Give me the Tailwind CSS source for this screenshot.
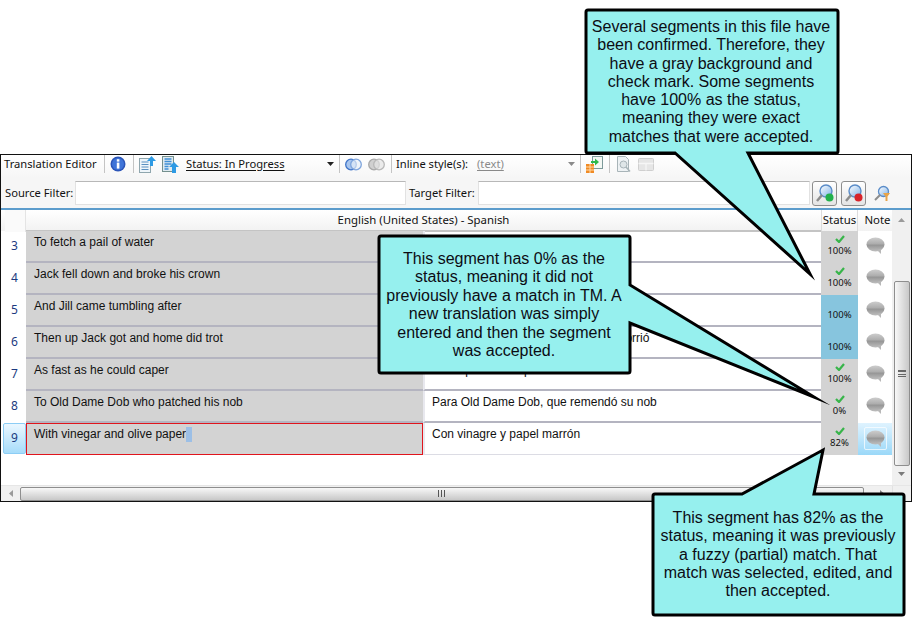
<!DOCTYPE html>
<html lang="en">
<head>
<meta charset="UTF-8">
<title>Translation Editor</title>
<script src="https://cdn.jsdelivr.net/npm/@tailwindcss/browser@4"></script>
</head>
<body class="bg-white">
<svg width="0" height="0" class="absolute">
  <defs>
    <linearGradient id="bubbleFill" x1="0" y1="0" x2="0" y2="1">
      <stop offset="0" stop-color="#cdcdcd"/><stop offset="0.45" stop-color="#adadad"/><stop offset="0.55" stop-color="#969696"/><stop offset="1" stop-color="#bebebe"/>
    </linearGradient>
    <symbol id="bubble" viewBox="0 0 19 18">
      <ellipse cx="9.5" cy="7.5" rx="9" ry="7" fill="url(#bubbleFill)"/>
      <path d="M11 13l4 4 0-5z" fill="#b8b8b8"/>
    </symbol>
    <symbol id="check" viewBox="0 0 10 8">
      <path d="M1 4l3 3 5-6" fill="none" stroke="#38b54a" stroke-width="2.2"/>
    </symbol>
    <linearGradient id="lensFill" x1="0" y1="0" x2="1" y2="1">
      <stop offset="0" stop-color="#ffffff"/><stop offset="1" stop-color="#7fb2e8"/>
    </linearGradient>
  </defs>
</svg>

<div class="relative h-[625px] w-[912px] overflow-hidden pt-[154px] font-['Noto_Sans',sans-serif] text-[#111]">
  <!-- editor window -->
  <div class="flex h-[348px] w-[912px] flex-col border border-[#111] bg-white">
    <!-- toolbar -->
    <div class="flex h-[23px] shrink-0 items-center bg-gradient-to-b from-white to-[#f6f6f6] pb-[5px] pl-[3px] text-[11.200px]">
      <span class="w-[100px] whitespace-nowrap">Translation Editor</span>
      <i class="mr-[5px] h-[18px] w-px bg-[#c4c4c4]"></i>
      <svg width="16" height="16" viewBox="0 0 16 16"><circle cx="8" cy="8" r="7.5" fill="#2b55b8"/><circle cx="8" cy="8" r="6" fill="#3f74d8"/><rect x="6.8" y="6.6" width="2.6" height="6" fill="#fff"/><rect x="6.8" y="3.2" width="2.6" height="2.4" fill="#fff"/></svg>
      <i class="ml-[7px] mr-[5px] h-[18px] w-px bg-[#c4c4c4]"></i>
      <svg width="17" height="17" viewBox="0 0 17 17"><rect x="0.5" y="2.5" width="11" height="14" fill="#eef5fa" stroke="#8fa6ae"/><path d="M2.5 6h7M2.5 8.5h7M2.5 11h7M2.5 13.5h7" stroke="#5a8fc0"/><path d="M12.5 0l4.5 5h-3v5h-3V5H8z" fill="#2e9ae4"/></svg>
      <svg class="ml-[6px]" width="17" height="17" viewBox="0 0 17 17"><rect x="0.5" y="0.5" width="11" height="15" fill="#dfeaf0" stroke="#74908e"/><path d="M2.5 3h7M2.5 5.5h7M2.5 8h7M2.5 10.5h4M2.5 13h4" stroke="#3f8fd6" stroke-width="1.4"/><path d="M12 6l5 5h-3v6h-4v-6H7z" fill="#2e9ae4"/></svg>
      <span class="ml-[7px] w-[141px] whitespace-nowrap underline underline-offset-2">Status: In Progress</span>
      <svg width="7" height="4" viewBox="0 0 7 4"><path d="M0 0h7L3.500 4z" fill="#222"/></svg>
      <i class="ml-[5px] mr-[5px] h-[18px] w-px bg-[#c4c4c4]"></i>
      <svg width="17" height="13" viewBox="0 0 17 13"><circle cx="6" cy="6.500" r="5.300" fill="#a9c6ee" stroke="#3f74c8" stroke-width="1.300"/><circle cx="11" cy="6.500" r="5.300" fill="#e8eff8" fill-opacity="0.7" stroke="#7ea4dc" stroke-width="1.300"/></svg>
      <svg class="ml-[6px]" width="17" height="13" viewBox="0 0 17 13"><circle cx="6" cy="6.500" r="5.300" fill="#d0d0d0" stroke="#a8a8a8" stroke-width="1.300"/><circle cx="11" cy="6.500" r="5.300" fill="#e4e4e4" fill-opacity="0.7" stroke="#b8b8b8" stroke-width="1.300"/></svg>
      <i class="ml-[6px] mr-[4px] h-[18px] w-px bg-[#c4c4c4]"></i>
      <span class="w-[81px] whitespace-nowrap">Inline style(s):</span>
      <span class="w-[91px] whitespace-nowrap text-[#8a8a8a] underline underline-offset-2">(text)</span>
      <svg width="7" height="4" viewBox="0 0 7 4"><path d="M0 0h7L3.500 4z" fill="#8a8a8a"/></svg>
      <i class="ml-[5px] mr-[5px] h-[18px] w-px bg-[#c4c4c4]"></i>
      <svg width="17" height="17" viewBox="0 0 17 17"><rect x="6.500" y="0.500" width="10" height="12" fill="#f4f8f4" stroke="#7d9a9a"/><rect x="0" y="8" width="8" height="9" fill="#f08a24"/><path d="M0 11h8M0 14h8M4 8v9" stroke="#ffd9a8"/><path d="M5 5h4V2.500l4 3.500-4 3.500V7H5z" fill="#2fb84a"/></svg>
      <i class="ml-[6px] mr-[6px] h-[18px] w-px bg-[#c4c4c4]"></i>
      <svg width="17" height="17" viewBox="0 0 17 17"><path d="M1.500 0.500h8l3 3v12h-11z" fill="#eef2f4" stroke="#a8b4b8"/><circle cx="7.500" cy="8.500" r="3.500" fill="#dfe6e8" stroke="#a8b4b8"/><path d="M10 11l4 4.500" stroke="#a8b4b8" stroke-width="1.500"/></svg>
      <svg class="ml-[5px]" width="16" height="13" viewBox="0 0 16 13"><rect x="0.500" y="0.500" width="15" height="12" rx="1" fill="#e6e6e6" stroke="#cfcfcf"/><path d="M0.500 5.500h15M8 5.500v7" stroke="#f6f6f6" stroke-width="1.300"/></svg>
    </div>
    <!-- filters -->
    <div class="flex h-[30px] shrink-0 items-center bg-[#f6f6f6] pl-[4px] text-[11.200px]">
      <span class="w-[70px] whitespace-nowrap">Source Filter:</span>
      <div class="h-[24px] w-[331px] border border-[#e2e2e2] border-t-[#b8b8b8] bg-white"></div>
      <span class="ml-[3px] w-[69px] whitespace-nowrap">Target Filter:</span>
      <div class="h-[24px] w-[332px] border border-[#e2e2e2] border-t-[#b8b8b8] bg-white"></div>
      <button class="ml-[2px] flex h-[25px] w-[25px] items-center justify-center rounded-[3px] border border-[#8e8e8e] bg-gradient-to-b from-white to-[#e4e4e4]">
        <svg width="20" height="20" viewBox="0 0 20 20"><circle cx="11" cy="8" r="6" fill="url(#lensFill)" stroke="#5a8cc8" stroke-width="1.400"/><path d="M7 12l-5 6" stroke="#8c8c8c" stroke-width="2.500"/><circle cx="14.500" cy="14.500" r="4" fill="#22b14c"/></svg>
      </button>
      <button class="ml-[4px] flex h-[25px] w-[25px] items-center justify-center rounded-[3px] border border-[#8e8e8e] bg-gradient-to-b from-white to-[#e4e4e4]">
        <svg width="20" height="20" viewBox="0 0 20 20"><circle cx="11" cy="8" r="6" fill="url(#lensFill)" stroke="#5a8cc8" stroke-width="1.400"/><path d="M7 12l-5 6" stroke="#8c8c8c" stroke-width="2.500"/><circle cx="14.500" cy="14.500" r="4" fill="#d8232a"/></svg>
      </button>
      <svg class="ml-[8px]" width="17" height="17" viewBox="0 0 17 17"><circle cx="9.500" cy="6.500" r="5" fill="url(#lensFill)" stroke="#5a8cc8" stroke-width="1.300"/><path d="M6 10l-5 5" stroke="#8c8c8c" stroke-width="2"/><path d="M9 8h7l-2.500 3.500V16h-2v-4.500z" fill="#e8a44a"/></svg>
    </div>
    <!-- grid -->
    <div class="flex min-h-0 flex-1 border-t-2 border-[#5c9ccc]">
      <div class="flex min-w-0 flex-1 flex-col">
        <!-- header -->
        <div class="grid h-[21px] shrink-0 grid-cols-[21px_397px_398px_37px_34px] bg-gradient-to-b from-white to-[#f2f2f2] pl-[4px] text-center text-[11.400px] leading-[20px]">
          <div class="border-r border-[#e4e4e4] bg-[#fafafa]"></div>
          <div class="col-span-2 border-b-2 border-[#c4c4c4]">English (United States) - Spanish</div>
          <div class="border-x border-[#dcdcdc]">Status</div>
          <div class="whitespace-nowrap pl-[5px]">Note</div>
        </div>
        <!-- rows -->
        <div class="grid grid-cols-[25px_397px_398px_37px_34px] auto-rows-[32px] font-['Liberation_Sans',sans-serif] text-[12px] leading-[14px]">
          <div class="pt-[8px] pl-[2px] text-center font-['Noto_Sans',sans-serif] text-[#1b3a80]">3</div>
          <div class="border-b-2 border-[#b4b4c0] bg-[#d3d3d3] pl-[8px] pt-[4px]">To fetch a pail of water</div>
          <div class="border-b-2 border-l-2 border-[#b4b4c0] border-l-[#e8e8ee]"></div>
          <div class="flex flex-col items-center bg-[#d3d3d3] pt-[4px] font-['Noto_Sans',sans-serif] text-[9.500px] leading-[13px]"><svg width="10" height="8"><use href="#check"/></svg><span class="mt-[1px]">100%</span></div>
          <div class="flex justify-center pl-[1px] pt-[6px]"><svg width="19" height="18"><use href="#bubble"/></svg></div>

          <div class="pt-[8px] pl-[2px] text-center font-['Noto_Sans',sans-serif] text-[#1b3a80]">4</div>
          <div class="border-b-2 border-[#b4b4c0] bg-[#d3d3d3] pl-[8px] pt-[4px]">Jack fell down and broke his crown</div>
          <div class="border-b-2 border-l-2 border-[#b4b4c0] border-l-[#e8e8ee]"></div>
          <div class="flex flex-col items-center bg-[#d3d3d3] pt-[4px] font-['Noto_Sans',sans-serif] text-[9.500px] leading-[13px]"><svg width="10" height="8"><use href="#check"/></svg><span class="mt-[1px]">100%</span></div>
          <div class="flex justify-center pl-[1px] pt-[6px]"><svg width="19" height="18"><use href="#bubble"/></svg></div>

          <div class="pt-[8px] pl-[2px] text-center font-['Noto_Sans',sans-serif] text-[#1b3a80]">5</div>
          <div class="border-b-2 border-[#b4b4c0] bg-[#d3d3d3] pl-[8px] pt-[4px]">And Jill came tumbling after</div>
          <div class="border-b-2 border-l-2 border-[#b4b4c0] border-l-[#e8e8ee]"></div>
          <div class="flex flex-col items-center bg-[#87c5de] pt-[4px] font-['Noto_Sans',sans-serif] text-[9.500px] leading-[13px]"><i class="h-[8px]"></i><span class="mt-[1px]">100%</span></div>
          <div class="flex justify-center pl-[1px] pt-[6px]"><svg width="19" height="18"><use href="#bubble"/></svg></div>

          <div class="pt-[8px] pl-[2px] text-center font-['Noto_Sans',sans-serif] text-[#1b3a80]">6</div>
          <div class="border-b-2 border-[#b4b4c0] bg-[#d3d3d3] pl-[8px] pt-[4px]">Then up Jack got and home did trot</div>
          <div class="border-b-2 border-l-2 border-[#b4b4c0] border-l-[#e8e8ee] pl-[7px] pt-[4px] whitespace-nowrap">Entonces Jack se levantó y a casa corrió</div>
          <div class="flex flex-col items-center bg-[#87c5de] pt-[4px] font-['Noto_Sans',sans-serif] text-[9.500px] leading-[13px]"><i class="h-[8px]"></i><span class="mt-[1px]">100%</span></div>
          <div class="flex justify-center pl-[1px] pt-[6px]"><svg width="19" height="18"><use href="#bubble"/></svg></div>

          <div class="pt-[8px] pl-[2px] text-center font-['Noto_Sans',sans-serif] text-[#1b3a80]">7</div>
          <div class="border-b-2 border-[#b4b4c0] bg-[#d3d3d3] pl-[8px] pt-[4px]">As fast as he could caper</div>
          <div class="border-b-2 border-l-2 border-[#b4b4c0] border-l-[#e8e8ee] pl-[7px] pt-[4px]">Tan rápido como podía saltar</div>
          <div class="flex flex-col items-center bg-[#d3d3d3] pt-[4px] font-['Noto_Sans',sans-serif] text-[9.500px] leading-[13px]"><svg width="10" height="8"><use href="#check"/></svg><span class="mt-[1px]">100%</span></div>
          <div class="flex justify-center pl-[1px] pt-[6px]"><svg width="19" height="18"><use href="#bubble"/></svg></div>

          <div class="pt-[8px] pl-[2px] text-center font-['Noto_Sans',sans-serif] text-[#1b3a80]">8</div>
          <div class="border-b-2 border-[#b4b4c0] bg-[#d3d3d3] pl-[8px] pt-[4px]">To Old Dame Dob who patched his nob</div>
          <div class="border-b-2 border-l-2 border-[#b4b4c0] border-l-[#e8e8ee] pl-[7px] pt-[4px]">Para Old Dame Dob, que remendó su nob</div>
          <div class="flex flex-col items-center bg-[#d3d3d3] pt-[4px] font-['Noto_Sans',sans-serif] text-[9.500px] leading-[13px]"><svg width="10" height="8"><use href="#check"/></svg><span class="mt-[1px]">0%</span></div>
          <div class="flex justify-center pl-[1px] pt-[6px]"><svg width="19" height="18"><use href="#bubble"/></svg></div>

          <div class="mb-[1px] ml-[2px] rounded-[2px] border border-[#8ccdf5] bg-gradient-to-b from-[#eaf7ff] to-[#a6dcfa] pt-[7px] text-center font-['Noto_Sans',sans-serif] text-[#1b3a80]">9</div>
          <div class="border border-[#e0141c] bg-[#d3d3d3] pl-[7px] pt-[3px]">With vinegar and olive paper<span class="inline-block h-[15px] w-[6px] bg-[#9cbfe6] align-top"></span></div>
          <div class="border-b border-l-2 border-[#dcdce4] border-l-[#e8e8ee] pl-[7px] pt-[4px]">Con vinagre y papel marrón</div>
          <div class="flex flex-col items-center bg-[#d3d3d3] pt-[4px] font-['Noto_Sans',sans-serif] text-[9.500px] leading-[13px]"><svg width="10" height="8"><use href="#check"/></svg><span class="mt-[1px]">82%</span></div>
          <div class="flex justify-center bg-gradient-to-b from-[#dff3ff] to-[#9ad8f8] pl-[1px] pt-[4px]"><div class="flex h-[23px] w-[23px] items-center justify-center rounded-[2px] border border-white/70"><svg width="19" height="18"><use href="#bubble"/></svg></div></div>
        </div>
      </div>
      <!-- vertical scrollbar -->
      <div class="flex w-[19px] shrink-0 flex-col items-center bg-[#f0f0f0]">
        <svg class="mt-[8px]" width="7" height="4" viewBox="0 0 7 4"><path d="M0 4h7L3.500 0z" fill="#9a9a9a"/></svg>
        <div class="mt-[59px] flex h-[185px] w-[16px] items-center justify-center rounded-[2px] border border-[#8e8e8e] bg-gradient-to-r from-[#f8f8f8] to-[#c8c8c8]">
          <div class="h-[7px] w-[8px] border-y border-[#666] bg-[linear-gradient(#666_1px,transparent_1px)] bg-[length:100%_3px]"></div>
        </div>
        <svg class="mt-[6px]" width="7" height="4" viewBox="0 0 7 4"><path d="M0 0h7L3.500 4z" fill="#7a7a7a"/></svg>
      </div>
    </div>
    <!-- horizontal scrollbar -->
    <div class="flex h-[16px] shrink-0 items-center border-t border-[#e6e6e6] bg-[#f0f0f0] pl-[8px]">
      <svg width="4" height="7" viewBox="0 0 4 7"><path d="M4 0v7L0 3.500z" fill="#9a9a9a"/></svg>
      <div class="ml-[7px] flex h-[14px] w-[844px] items-center justify-center rounded-[2px] border border-[#8e8e8e] bg-gradient-to-b from-[#f8f8f8] to-[#c8c8c8]">
        <div class="-ml-[2px] h-[7px] w-[7px] bg-[linear-gradient(90deg,#555_1px,transparent_1px)] bg-[length:3px_100%]"></div>
      </div>
      <svg class="ml-[16px]" width="4" height="7" viewBox="0 0 4 7"><path d="M0 0v7l4-3.500z" fill="#7a7a7a"/></svg>
      <div class="ml-auto h-full w-[19px] border-l border-[#e2e2e2]"></div>
    </div>
  </div>

  <!-- callouts -->
  <svg class="absolute left-0 top-0" width="912" height="625" viewBox="0 0 912 625" fill="#96f0ee" stroke="#000" stroke-width="3" stroke-linejoin="miter" stroke-miterlimit="30">
    <path d="M588 10H836Q838 10 838 12V151Q838 153 836 153H748L810 274L675 153H588Q586 153 586 151V12Q586 10 588 10Z"/>
    <path d="M381 236H628Q630 236 630 238V285L814 397L630 323V371Q630 373 628 373H381Q379 373 379 371V238Q379 236 381 236Z"/>
    <path d="M655 494H742L823 450L814 494H902Q904 494 904 496V613Q904 615 902 615H655Q653 615 653 613V496Q653 494 655 494Z"/>
  </svg>
  <p class="absolute left-[586px] top-[18px] w-[250px] text-center font-['Liberation_Sans',sans-serif] text-[16px] leading-[18.300px] text-[#0c0c14]">Several segments in this file have<br>been confirmed. Therefore, they<br>have a gray background and<br>check mark. Some segments<br>have 100% as the status,<br>meaning they were exact<br>matches that were accepted.</p>
  <p class="absolute left-[380px] top-[250px] w-[248px] text-center font-['Liberation_Sans',sans-serif] text-[16px] leading-[18.400px] text-[#0c0c14]">This segment has 0% as the<br>status, meaning it did not<br>previously have a match in TM. A<br>new translation was simply<br>entered and then the segment<br>was accepted.</p>
  <p class="absolute left-[653px] top-[509px] w-[250px] text-center font-['Liberation_Sans',sans-serif] text-[16px] leading-[18.300px] text-[#0c0c14]">This segment has 82% as the<br>status, meaning it was previously<br>a fuzzy (partial) match. That<br>match was selected, edited, and<br>then accepted.</p>
</div>
</body>
</html>
